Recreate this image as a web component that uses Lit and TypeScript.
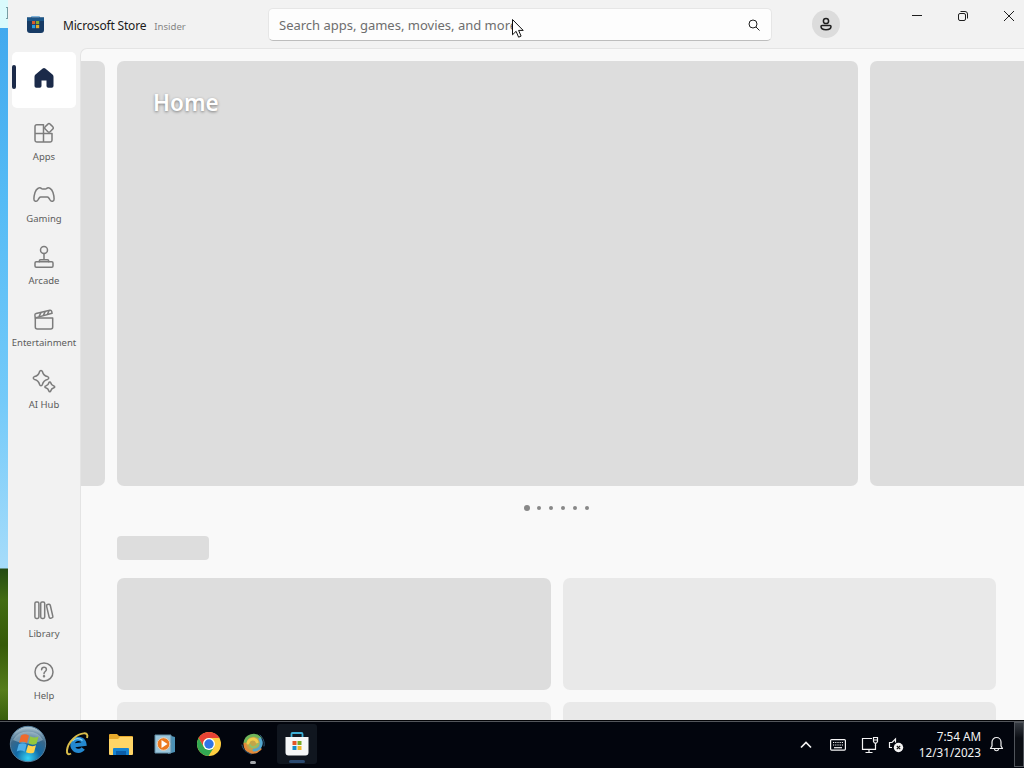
import { LitElement, html, css, svg } from 'lit';
import { customElement, property } from 'lit/decorators.js';
import { classMap } from 'lit/directives/class-map.js';

const navIcons: Record<string, unknown> = {
  home: svg`<path d="M10.7 2.500a2 2 0 0 1 2.600 0l7.200 6.100c.7.600 1 1.300 1 2.100V20a1.800 1.800 0 0 1-1.800 1.800h-3.400A1.800 1.800 0 0 1 14.500 20v-5.500h-5V20a1.800 1.800 0 0 1-1.800 1.800H4.300A1.800 1.800 0 0 1 2.500 20v-9.300c0-.8.3-1.500 1-2.100z" fill="#1b2a49" stroke="none"/>`,
  apps: svg`<path d="M11.500 3.800H4.700A1.700 1.700 0 0 0 3 5.500v13.800A1.700 1.700 0 0 0 4.700 21h13.600a1.700 1.700 0 0 0 1.700-1.700v-6.800H3M11.500 3.800V21"/><path d="M15.900 3.100a1.500 1.500 0 0 1 2.200 0l2.700 2.700a1.500 1.500 0 0 1 0 2.200l-2.700 2.700a1.500 1.500 0 0 1-2.200 0L13.200 8a1.500 1.500 0 0 1 0-2.200z" fill="#f2f2f2"/>`,
  gaming: svg`<path d="M6.200 5.200c1.200-.5 2.500-.4 3.300.4.300.4.700.5 1.200.5h2.600c.5 0 .9-.1 1.200-.5.8-.8 2.100-.9 3.300-.4 1.500.7 2.500 2 3.200 4.300.8 2.500 1.100 4.600 1.100 6.500 0 2.600-2.500 3.100-3.900 1.100l-1.400-2.100c-.4-.6-.9-.9-1.600-.9H8.800c-.7 0-1.200.3-1.600.9l-1.400 2.100c-1.400 2-3.900 1.500-3.900-1.100 0-1.900.3-4 1.100-6.500.7-2.300 1.700-3.600 3.200-4.300z"/>`,
  arcade: svg`<circle cx="12" cy="5" r="3.500"/><path d="M12 8.500v6.200M7.300 16.800v-.8a1.300 1.300 0 0 1 1.300-1.300h6.800a1.300 1.300 0 0 1 1.300 1.300v.8"/><rect x="3" y="16.800" width="18" height="5.500" rx="1.200"/>`,
  entertainment: svg`<path d="M3.300 10.900h17.400v9.200a2 2 0 0 1-2 2H5.300a2 2 0 0 1-2-2z"/><path d="M3.300 10.900 2.900 8.500a1.600 1.600 0 0 1 1.200-1.900l13.700-3.300a1.600 1.600 0 0 1 1.900 1.100l.4 1.900L3.300 10.900M9 5.600 7 9.500M13.200 4.600l-2 3.900M17.200 3.600l-2 3.900"/>`,
  ai: svg`<path d="M9 1.400c.8 0 1.200.5 1.400 1.100.8 3.300 1.800 4.300 5.100 5.100.7.2 1.200.7 1.200 1.400s-.5 1.200-1.200 1.400c-3.300.8-4.300 1.800-5.100 5.100-.2.700-.6 1.200-1.400 1.200s-1.200-.5-1.400-1.200c-.8-3.300-1.800-4.300-5.100-5.100-.7-.2-1.200-.7-1.200-1.400s.5-1.200 1.200-1.400c3.300-.8 4.300-1.800 5.100-5.100.2-.6.6-1.100 1.400-1.100z"/><path d="M17.800 13c.5 0 .8.300.9.800.5 2 1.100 2.700 3.200 3.200.5.100.8.400.8.900s-.3.800-.8.900c-2.100.5-2.700 1.200-3.200 3.200-.1.500-.4.800-.9.800s-.8-.3-.9-.8c-.5-2-1.100-2.700-3.200-3.200-.5-.1-.8-.4-.8-.9s.3-.8.800-.9c2.100-.5 2.700-1.200 3.200-3.200.1-.5.4-.8.900-.8z"/>`,
  library: svg`<rect x="2.900" y="4" width="4" height="16.500" rx="1.400"/><rect x="8.700" y="4" width="4" height="16.500" rx="1.400"/><rect x="15.800" y="6.200" width="3.800" height="14" rx="1.300" transform="rotate(-13 17.700 13.200)"/>`,
  help: svg`<circle cx="12" cy="12" r="9"/><path d="M9.600 9.700c.1-1.500 1-2.400 2.400-2.400s2.400.9 2.400 2.200c0 2-2.400 2.100-2.400 4.200"/><circle cx="12" cy="16.300" r=".5" fill="#6e6e6e"/>`,
};

@customElement('store-nav-item')
export class StoreNavItem extends LitElement {
  static styles = css`
    :host {
      display: block;
    }

    .item {
      display: flex;
      flex-direction: column;
      align-items: center;
      width: 64px;
      height: 56px;
      padding-top: 7px;
      box-sizing: border-box;
      font-size: 9.5px;
      line-height: 14px;
      color: #5c5c5c;
      white-space: nowrap;
    }

    .item.active {
      position: relative;
      padding-top: 14px;
      background: #fff;
      border-radius: 5px;
    }

    .item.active::before {
      content: '';
      position: absolute;
      left: 0;
      top: 13px;
      width: 4px;
      height: 24px;
      border-radius: 2px;
      background: #1b2a49;
    }

    svg {
      flex: none;
      width: 24px;
      height: 24px;
      fill: none;
      stroke: #7c7c7c;
      stroke-width: 1.5;
      stroke-linecap: round;
      stroke-linejoin: round;
    }

    .label {
      margin-top: 5px;
    }
  `;

  @property({ type: String }) icon = 'home';
  @property({ type: String }) label = '';
  @property({ type: Boolean }) active = false;

  render() {
    return html`
      <div class=${classMap({ item: true, active: this.active })}>
        <svg viewBox="0 0 24 24">${navIcons[this.icon]}</svg>
        ${this.label ? html`<span class="label">${this.label}</span>` : ''}
      </div>
    `;
  }
}

@customElement('store-header')
export class StoreHeader extends LitElement {
  static styles = css`
    :host {
      display: flex;
      align-items: center;
      flex: none;
      height: 48px;
      padding-left: 18px;
      box-sizing: border-box;
      color: #1b1b1b;
    }

    .logo {
      width: 19px;
      height: 19px;
      margin-top: 1px;
    }

    .brand {
      display: flex;
      align-items: baseline;
      gap: 8px;
      width: 205px;
      margin-left: 18px;
      padding-top: 2px;
      font-size: 12px;
      letter-spacing: -0.18px;
      white-space: nowrap;
    }

    .insider {
      font-size: 9.6px;
      letter-spacing: 0;
      color: #858585;
    }

    .search {
      display: flex;
      align-items: center;
      justify-content: space-between;
      width: 504px;
      height: 33px;
      margin-top: 1px;
      padding: 0 10px;
      box-sizing: border-box;
      border: 1px solid #e6e6e6;
      border-bottom-color: #bdbdbd;
      border-radius: 5px;
      background: #fdfdfd;
      font-size: 13px;
      color: #6e6e6e;
    }

    .search svg {
      width: 14px;
      height: 14px;
    }

    .account {
      display: grid;
      place-items: center;
      width: 28px;
      height: 28px;
      margin-left: 40px;
      border-radius: 50%;
      background: #dcdcdc;
    }

    .controls {
      display: flex;
      gap: 34px;
      margin: -17px 0 0 71px;
    }

    .controls svg {
      width: 12px;
      height: 12px;
    }

    svg {
      display: block;
      fill: none;
      stroke: #1f1f1f;
    }
  `;

  render() {
    return html`
      <svg class="logo" viewBox="0 0 19 19">
        <path d="M5.500 3V1.500h8V3" stroke="#7fb4dc" />
        <path d="M1 2.500h17V15a3 3 0 0 1-3 3H4a3 3 0 0 1-3-3z" fill="#173b65" stroke="none" />
        <path d="M1 2.500h17V6H1z" fill="#1c5688" stroke="none" />
        <path d="M6 6h3.200v3.200H6z" fill="#d95b2b" stroke="none" />
        <path d="M10 6h3.200v3.200H10z" fill="#85ad2f" stroke="none" />
        <path d="M6 10h3.200v3.200H6z" fill="#26a0e0" stroke="none" />
        <path d="M10 10h3.200v3.200H10z" fill="#e5ac2c" stroke="none" />
      </svg>
      <div class="brand">Microsoft Store <span class="insider">Insider</span></div>
      <div class="search">
        <span>Search apps, games, movies, and more</span>
        <svg viewBox="0 0 14 14"><circle cx="6" cy="6" r="4" /><path d="m9 9 3.500 3.500" /></svg>
      </div>
      <div class="account">
        <svg width="14" height="14" viewBox="0 0 14 14" stroke-width="1.500">
          <circle cx="7" cy="4" r="2.600" />
          <path d="M3 8.500h8a1 1 0 0 1 1 1c0 1.900-2 3.200-5 3.200s-5-1.300-5-3.200a1 1 0 0 1 1-1z" />
        </svg>
      </div>
      <div class="controls">
        <svg viewBox="0 0 12 12"><path d="M1 5.500h10" /></svg>
        <svg viewBox="0 0 12 12">
          <rect x="1.500" y="3.500" width="7" height="7" rx="1.500" />
          <path d="M3.500 1.500H8A2.500 2.500 0 0 1 10.500 4v4.500" />
        </svg>
        <svg viewBox="0 0 12 12"><path d="m1 1 10 10M11 1 1 11" /></svg>
      </div>
    `;
  }
}

@customElement('task-bar')
export class TaskBar extends LitElement {
  static styles = css`
    :host {
      display: flex;
      justify-content: space-between;
      height: 48px;
      box-sizing: border-box;
      border-top: 1px solid #050608;
      background: #02050d;
      box-shadow: inset 0 1px #53565b;
      color: #f4f4f4;
    }

    svg {
      display: block;
    }

    .apps {
      display: flex;
      padding-left: 7px;
    }

    .app {
      display: grid;
      place-items: center;
      width: 44px;
      height: 46px;
    }

    .app.start {
      width: 48px;
      padding-right: 7px;
      box-sizing: border-box;
    }

    .app.running {
      position: relative;
    }

    .app.running::after {
      content: '';
      position: absolute;
      left: 19px;
      bottom: 3px;
      width: 6px;
      height: 3px;
      border-radius: 2px;
      background: #a5a8ac;
    }

    .app.selected {
      width: 40px;
      height: 40px;
      margin: 3px 0 0 2px;
      border-radius: 3px;
      background: #10161f;
    }

    .app.selected::after {
      left: 12px;
      bottom: 1px;
      width: 16px;
      background: #2b4a70;
    }

    .tray {
      display: flex;
      align-items: center;
    }

    .tray svg {
      fill: none;
      stroke: #f4f4f4;
      stroke-width: 1.2;
    }

    .tray .chevron {
      margin-right: 18px;
      stroke-width: 1.7;
    }

    .keyboard {
      margin-right: 15px;
    }

    .network {
      margin-right: 9px;
    }

    .clock {
      width: 77px;
      margin: -2px 8px 0 0;
      font-size: 11.7px;
      line-height: 16px;
      text-align: right;
      white-space: nowrap;
    }

    .bell {
      margin-top: -1px;
    }

    .tray .mute {
      stroke: #111;
    }

    .desktop {
      align-self: stretch;
      width: 10px;
      margin: 1px 0 1px 10px;
      box-sizing: border-box;
      border: 1px solid #50545a;
      background: linear-gradient(#363b42, #0b0e14 35%);
    }
  `;

  render() {
    return html`
      <div class="apps">
        <div class="app start">
          <svg width="38" height="38" viewBox="0 0 38 38">
            <defs>
              <radialGradient id="orb" cx=".5" cy=".9" r=".85">
                <stop offset="0" stop-color="#35d2f5" />
                <stop offset=".4" stop-color="#126aa6" />
                <stop offset=".75" stop-color="#3a6788" />
                <stop offset="1" stop-color="#a8c0ce" />
              </radialGradient>
            </defs>
            <circle cx="19" cy="19" r="17.700" fill="url(#orb)" stroke="#557f9d" />
            <path d="M4 15a16 13 0 0 1 30 0q-14 7-30 0z" fill="#d3e3e9" opacity=".4" />
            <path d="M12 10.500q4-2.500 8 .2l-2 7.300q-4-2.300-8-.2z" fill="#ef6b2e" />
            <path d="M21.300 11.300q4 2.300 8.200.2l-2 7.200q-4 2-8-.2z" fill="#94c83d" />
            <path d="M9.700 19.200q4-2 8 .2l-2 7.300q-4-2.300-8-.1z" fill="#4daee8" />
            <path d="M19 20q4 2.200 8 .2l-2 7.200q-4 2-8-.2z" fill="#ffd34e" />
          </svg>
        </div>
        <div class="app">
          <svg width="26" height="26" viewBox="0 0 26 26" fill="none">
            <path d="M19.200 17.500a6 6 0 1 1 1.200-4.500L9 14.500" stroke="#2388cf" stroke-width="4.200" />
            <path d="M18.500 9.500a7 7 0 0 0-10 .5" stroke="#8ad5f8" stroke-width="1.300" />
            <path d="M7 22.500C1 26 1.500 15 9.500 7.500 16.500 1 25.500.5 23 7" stroke="#d9bd4b" stroke-width="2" />
          </svg>
        </div>
        <div class="app">
          <svg width="26" height="24" viewBox="0 0 26 24">
            <path d="M1 3a1 1 0 0 1 1-1h7l2 2h13a1 1 0 0 1 1 1v14H1z" fill="#e7a92c" />
            <path d="M1 7h9l2-2h13v17a1 1 0 0 1-1 1H2a1 1 0 0 1-1-1z" fill="#ffd566" />
            <path d="M5 23v-6a1 1 0 0 1 1-1h14a1 1 0 0 1 1 1v6z" fill="#1683d1" />
            <path d="M8 19h10v4H8z" fill="#0b5da8" />
          </svg>
        </div>
        <div class="app">
          <svg width="22" height="22" viewBox="0 0 22 22">
            <path d="m14 2 7 2v15l-7 2z" fill="#4c91b5" />
            <path d="M1 2h16v18H1z" fill="#9cc7dc" stroke="#628fa7" />
            <circle cx="9.500" cy="11" r="6.300" fill="#ec791f" stroke="#e8d2bc" />
            <path d="m7.500 7 6 4-6 4z" fill="#fff" />
          </svg>
        </div>
        <div class="app">
          <svg width="26" height="26" viewBox="0 0 26 26">
            <circle cx="13" cy="13" r="12" fill="#ffcf40" />
            <path d="M2.600 7A12 12 0 0 1 23.400 7H13a6 6 0 0 0-5.200 9z" fill="#e84335" />
            <path d="M2.600 7 7.800 16A6 6 0 0 0 13 19l-.5 6A12 12 0 0 1 2.600 7z" fill="#32a852" />
            <path d="m12.500 25 5.700-9-5.200 3-5.200-3z" fill="#32a852" />
            <circle cx="13" cy="13" r="6" fill="#fff" />
            <circle cx="13" cy="13" r="4.700" fill="#2f75e6" />
          </svg>
        </div>
        <div class="app running">
          <svg width="26" height="26" viewBox="0 0 26 26" fill="none" stroke-linecap="round">
            <circle cx="13" cy="12.500" r="8.500" fill="#c2a548" />
            <path d="M5 12C6 4 15 2 20 7" stroke="#6eb55a" stroke-width="3" />
            <path d="M5 13c0 8 9 11 15 5" stroke="#e38a3a" stroke-width="3" />
            <path d="M20 8c3 5 0 11-6 11" stroke="#54a8cf" stroke-width="3" />
            <path d="M8 12c1-5 8-5 9-1" stroke="#f0cc4c" stroke-width="3" />
            <path d="M10 14c1 3 6 3 8-1" stroke="#8fc06a" stroke-width="2" />
            <path d="M2 14c1 5 4 7 9 9M24 15c1-4-1-8-4-11" stroke="#315b76" />
          </svg>
        </div>
        <div class="app running selected">
          <svg width="24" height="26" viewBox="0 0 24 26">
            <path d="M6.500 7V3a1 1 0 0 1 1-1h9a1 1 0 0 1 1 1v4" fill="none" stroke="#3daed5" stroke-width="1.800" />
            <path d="M.5 6h23v15.500a3 3 0 0 1-3 3h-17a3 3 0 0 1-3-3z" fill="#f5f7f8" />
            <path d="M7.500 10h4v4h-4z" fill="#e55427" />
            <path d="M12.500 10h4v4h-4z" fill="#78aa26" />
            <path d="M7.500 15h4v4h-4z" fill="#168bc8" />
            <path d="M12.500 15h4v4h-4z" fill="#f0b629" />
          </svg>
        </div>
      </div>
      <div class="tray">
        <svg class="chevron" width="12" height="8" viewBox="0 0 12 8"><path d="m1 6.500 5-5 5 5" /></svg>
        <svg class="keyboard" width="16" height="12" viewBox="0 0 16 12">
          <rect x=".6" y=".6" width="14.800" height="10.500" rx="1" />
          <path d="M3 3.500h10.500M3 6h10.500" stroke-dasharray="1.200 1" />
          <path d="M4 8.700h8" />
        </svg>
        <svg class="network" width="18" height="18" viewBox="0 0 18 18">
          <path d="M11 2.500H1.500v10.800h13V9M8 13.500v3M4.500 16.500h7" />
          <path d="M12.500 1.500h4v4l-1 1.500h-2l-1-1.500zM12.500 4h4M14.500 7v3" />
        </svg>
        <svg width="16" height="16" viewBox="0 0 16 16">
          <path d="M4 10.500H1.500v-5H4L7.500 2v3.500" />
          <circle cx="10.500" cy="10.500" r="4.700" fill="#f4f4f4" stroke="none" />
          <path class="mute" d="m8.800 8.800 3.400 3.400M12.200 8.800l-3.400 3.400" />
        </svg>
        <div class="clock">7:54 AM<br />12/31/2023</div>
        <svg class="bell" width="15" height="17" viewBox="0 0 15 17">
          <path d="M7.500 1.500a4.500 4.500 0 0 0-4.500 4.500v4L1.500 12.500h12L12 10V6a4.500 4.500 0 0 0-4.500-4.500zM5.500 13c.2 2.300 3.800 2.300 4 0" stroke-linejoin="round" />
        </svg>
        <div class="desktop"></div>
      </div>
    `;
  }
}

@customElement('app-root')
export class AppRoot extends LitElement {
  static styles = css`
    :host {
      display: flex;
      flex-direction: column;
      position: relative;
      width: 1024px;
      height: 768px;
      overflow: hidden;
      font-family: 'Noto Sans', 'Open Sans', sans-serif;
    }

    .screen {
      display: flex;
      height: 720px;
    }

    .wallpaper {
      flex: none;
      width: 8px;
      overflow: hidden;
      background: linear-gradient(#d9fafc 0 28px, #42a9ee 28px, #55bbf5 200px, #74caf9 400px, #a6dcfa 568px, #244b12 569px, #426c12 600px, #365a09 645px, #567d1b 690px, #385f0c);
    }

    .caret {
      width: 2px;
      height: 12px;
      margin: 7px 0 0 6px;
      border: 1px solid #789da3;
      border-left: 0;
      box-sizing: border-box;
    }

    .window {
      display: flex;
      flex-direction: column;
      flex: 1;
      min-width: 0;
      background: #f2f2f2;
    }

    .body {
      display: flex;
      flex: 1;
      min-height: 0;
    }

    .sidebar {
      display: flex;
      flex-direction: column;
      flex: none;
      gap: 6px;
      width: 72px;
      padding: 4px 4px 11px;
      box-sizing: border-box;
    }

    .spacer {
      flex: 1;
    }

    .content {
      flex: 1;
      min-width: 0;
      overflow: hidden;
      border: solid #e4e4e4;
      border-width: 1px 0 0 1px;
      border-top-left-radius: 7px;
      background: #f9f9f9;
    }

    .carousel {
      display: flex;
      gap: 12px;
      margin-top: 12px;
    }

    .slide {
      flex: none;
      width: 741px;
      height: 425px;
      border-radius: 7px;
      background: #ddd;
    }

    .slide.previous {
      width: 24px;
      border-radius: 0 7px 7px 0;
    }

    .slide h1 {
      margin: 25px 0 0 36px;
      font-size: 22.5px;
      line-height: 34px;
      font-weight: 600;
      color: #fff;
      text-shadow: 0 1px 3px rgba(0, 0, 0, 0.45);
    }

    .dots {
      display: flex;
      align-items: center;
      justify-content: center;
      gap: 8px;
      height: 6px;
      margin: 19px 0 0 7px;
    }

    .dot {
      width: 4px;
      height: 4px;
      border-radius: 50%;
      background: #888;
    }

    .dot.current {
      width: 6px;
      height: 6px;
      margin-right: -1px;
    }

    .heading {
      width: 92px;
      height: 24px;
      margin: 25px 0 18px 36px;
      border-radius: 4px;
      background: #ddd;
    }

    .cards {
      display: grid;
      grid-template-columns: 433.5px 433.5px;
      grid-auto-rows: 112px;
      gap: 12px;
      margin-left: 36px;
    }

    .card {
      border-radius: 7px;
      background: #e9e9e9;
    }

    .card.first {
      background: #ddd;
    }

    .pointer {
      position: absolute;
      left: 511px;
      top: 18px;
    }
  `;

  render() {
    return html`
      <div class="screen">
        <div class="wallpaper"><div class="caret"></div></div>
        <div class="window">
          <store-header></store-header>
          <div class="body">
            <nav class="sidebar">
              <store-nav-item icon="home" active></store-nav-item>
              <store-nav-item icon="apps" label="Apps"></store-nav-item>
              <store-nav-item icon="gaming" label="Gaming"></store-nav-item>
              <store-nav-item icon="arcade" label="Arcade"></store-nav-item>
              <store-nav-item icon="entertainment" label="Entertainment"></store-nav-item>
              <store-nav-item icon="ai" label="AI Hub"></store-nav-item>
              <div class="spacer"></div>
              <store-nav-item icon="library" label="Library"></store-nav-item>
              <store-nav-item icon="help" label="Help"></store-nav-item>
            </nav>
            <main class="content">
              <div class="carousel">
                <div class="slide previous"></div>
                <div class="slide"><h1>Home</h1></div>
                <div class="slide"></div>
              </div>
              <div class="dots">
                ${[0, 1, 2, 3, 4, 5].map((i) => html`<span class=${classMap({ dot: true, current: i === 0 })}></span>`)}
              </div>
              <div class="heading"></div>
              <div class="cards">
                ${[0, 1, 2, 3].map((i) => html`<div class=${classMap({ card: true, first: i === 0 })}></div>`)}
              </div>
            </main>
          </div>
        </div>
      </div>
      <task-bar></task-bar>
      <svg class="pointer" width="14" height="22" viewBox="0 0 14 22">
        <path d="M1.500 1.500v15.300l3.600-3.500 2.500 5.900 2.500-1.100-2.500-5.700h4.600z" fill="#fff" stroke="#111" />
      </svg>
    `;
  }
}
